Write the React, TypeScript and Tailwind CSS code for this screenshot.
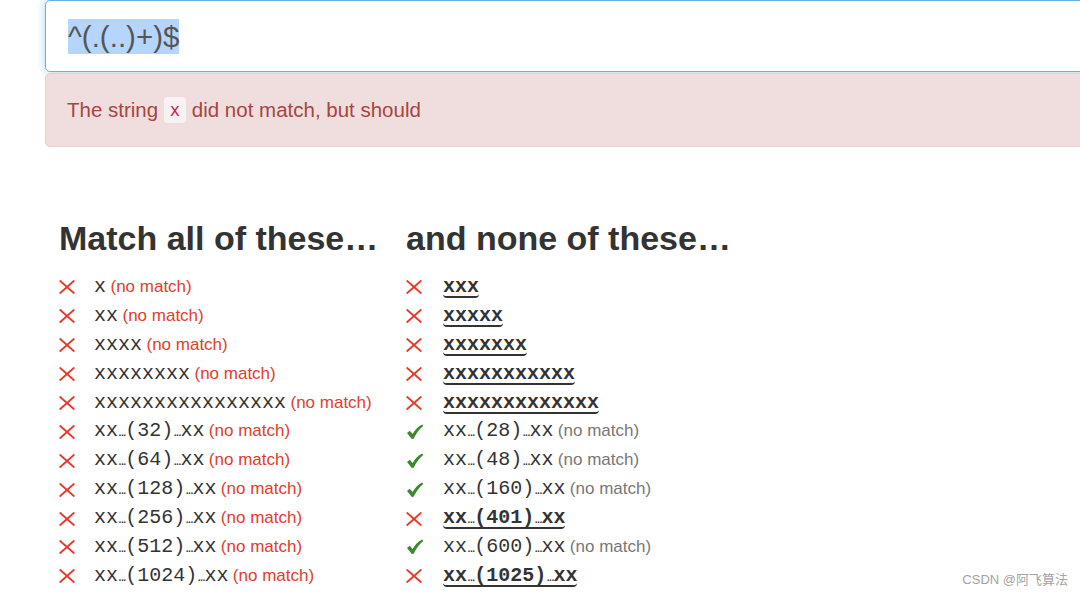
import React from "react";

const RED = "text-[#e23d2d]";

function XIcon() {
  return (
    <svg width="16" height="14" viewBox="0 0 16 14" className="block">
      <line x1="1.2" y1="1" x2="14.8" y2="13" stroke="#e8392b" strokeWidth="1.8" strokeLinecap="round" />
      <line x1="14.8" y1="1" x2="1.2" y2="13" stroke="#e8392b" strokeWidth="1.8" strokeLinecap="round" />
    </svg>
  );
}

function CheckIcon() {
  return (
    <svg width="18" height="16" viewBox="0 0 18 16" className="block">
      <path
        d="M1 9 L3.8 6.8 L6.6 10 C8.8 6.2 12 2.8 16.2 0.6 L17.2 1.9 C13.4 5 10.3 9.4 7.6 14.8 L5.8 15 Z"
        fill="#3a8a2d"
      />
    </svg>
  );
}

function Mono({ text }: { text: string }) {
  const parts = text.split("…");
  return (
    <>
      {parts.map((p, i) => (
        <React.Fragment key={i}>
          {p}
          {i < parts.length - 1 && (
            <span className="font-['Liberation_Sans',sans-serif] text-[14px] tracking-[-1.5px] font-normal">...</span>
          )}
        </React.Fragment>
      ))}
    </>
  );
}

type Row = { icon: "x" | "check"; text: string; note?: "red" | "gray"; bad?: boolean };

const left: Row[] = [
  "x",
  "xx",
  "xxxx",
  "xxxxxxxx",
  "xxxxxxxxxxxxxxxx",
  "xx…(32)…xx",
  "xx…(64)…xx",
  "xx…(128)…xx",
  "xx…(256)…xx",
  "xx…(512)…xx",
  "xx…(1024)…xx",
].map((t) => ({ icon: "x", text: t, note: "red" }));

const right: Row[] = [
  { icon: "x", text: "xxx", bad: true },
  { icon: "x", text: "xxxxx", bad: true },
  { icon: "x", text: "xxxxxxx", bad: true },
  { icon: "x", text: "xxxxxxxxxxx", bad: true },
  { icon: "x", text: "xxxxxxxxxxxxx", bad: true },
  { icon: "check", text: "xx…(28)…xx", note: "gray" },
  { icon: "check", text: "xx…(48)…xx", note: "gray" },
  { icon: "check", text: "xx…(160)…xx", note: "gray" },
  { icon: "x", text: "xx…(401)…xx", bad: true },
  { icon: "check", text: "xx…(600)…xx", note: "gray" },
  { icon: "x", text: "xx…(1025)…xx", bad: true },
];

function RowView({ row, iconW }: { row: Row; iconW: string }) {
  return (
    <div className="flex items-center h-[28.9px]">
      <div className={`${iconW} shrink-0 flex items-center`}>
        {row.icon === "x" ? <XIcon /> : <CheckIcon />}
      </div>
      <div className="whitespace-nowrap leading-[28.9px]">
        {row.bad ? (
          <span className="inline-block font-['Liberation_Mono',monospace] text-[20px] font-bold text-[#333] leading-[18px] border-b-2 border-[#333] rounded-[4px]">
            <Mono text={row.text} />
          </span>
        ) : (
          <span className="font-['Liberation_Mono',monospace] text-[20px] text-[#333]">
            <Mono text={row.text} />
          </span>
        )}
        {row.note && (
          <>
            {" "}
            <span className={`text-[17px] ${row.note === "red" ? RED : "text-[#777]"}`}>(no match)</span>
          </>
        )}
      </div>
    </div>
  );
}

export default function App() {
  return (
    <div className="relative w-[1080px] h-[595px] overflow-hidden bg-white font-['Liberation_Sans',Arial,sans-serif]">
      <div className="pl-[45px]">
        <div className="w-[1100px] h-[72px] bg-white border border-[#66afe9] rounded-[5px] shadow-[0_0_8px_rgba(102,175,233,0.6)] flex items-center pl-[22px]">
          <span className="text-[29.5px] text-[#555] bg-[#b6d5fc] leading-[35px]">^(.(..)+)$</span>
        </div>
        <div className="mt-[1px] w-[1100px] h-[74px] bg-[#f0dede] border border-[#e8cdd1] rounded-[5px] flex items-center pl-[21px] text-[#a94442]">
          <span className="text-[20.5px] whitespace-nowrap leading-[26px]">
            The string{" "}
            <code className="inline-block align-middle h-[26px] leading-[26px] px-[6px] -mt-[3px] rounded-[4px] bg-[#f9f2f4] text-[#c7254e] text-[17px] font-['DejaVu_Sans_Mono',monospace]">
              x
            </code>{" "}
            did not match, but should
          </span>
        </div>
      </div>

      <div className="flex pl-[59px] mt-[73px]">
        <div className="w-[347px] shrink-0">
          <h2 className="text-[34px] font-bold leading-[37px] text-[#333]">Match all of these…</h2>
          <div className="mt-[16px]">
            {left.map((r, i) => (
              <RowView key={i} row={r} iconW="w-[35px]" />
            ))}
          </div>
        </div>
        <div className="flex-1">
          <h2 className="text-[34px] font-bold leading-[37px] text-[#333]">and none of these…</h2>
          <div className="mt-[16px]">
            {right.map((r, i) => (
              <RowView key={i} row={r} iconW="w-[37px]" />
            ))}
          </div>
        </div>
      </div>

      <div className="absolute right-[12px] bottom-[6px] text-[13px] text-[#a3a3a3] font-['Liberation_Sans','Noto_Sans_CJK_SC',sans-serif]">
        CSDN @阿飞算法
      </div>
    </div>
  );
}
